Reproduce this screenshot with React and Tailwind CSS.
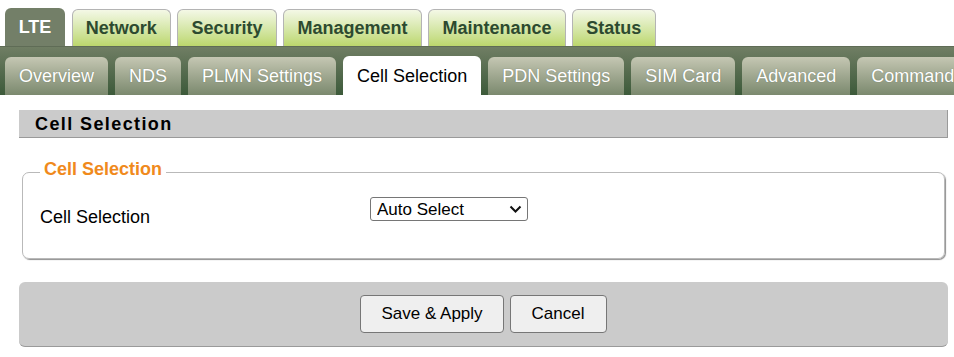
import React from "react";

const topTabs = ["LTE", "Network", "Security", "Management", "Maintenance", "Status"];
const subTabs = [
  "Overview",
  "NDS",
  "PLMN Settings",
  "Cell Selection",
  "PDN Settings",
  "SIM Card",
  "Advanced",
  "Command",
];

export default function App() {
  return (
    <div
      className="w-[954px] h-[357px] overflow-hidden bg-white text-black"
      style={{ fontFamily: '"Liberation Sans", Arial, sans-serif' }}
    >
      {/* Main tabs */}
      <div className="flex gap-[6.5px] pl-[5px] pt-[8px] whitespace-nowrap">
        {topTabs.map((t) =>
          t === "LTE" ? (
            <div
              key={t}
              className="h-[38px] w-[60px] flex items-center justify-center rounded-t-[6px] bg-[#737f68] text-white font-bold text-[18px] leading-[20px]"
            >
              {t}
            </div>
          ) : (
            <div
              key={t}
              className="h-[37px] mt-[1px] px-[13.2px] flex items-center rounded-t-[6px] border border-b-0 border-[#b4b4b4] bg-gradient-to-b from-[#f4f8e6] to-[#bcd76c] text-[#2d4a30] font-bold text-[18px] leading-[20px]"
            >
              {t}
            </div>
          )
        )}
      </div>

      {/* Sub tabs bar */}
      <div className="h-[49px] flex items-end gap-[7px] pl-[5px] border-t border-[#5f6c56] bg-gradient-to-b from-[#707e64] to-[#3c5a3a] whitespace-nowrap overflow-hidden">
        {subTabs.map((t) =>
          t === "Cell Selection" ? (
            <div
              key={t}
              className="h-[39px] shrink-0 px-[14px] flex items-center rounded-t-[6px] bg-white text-black text-[18px] leading-[20px]"
            >
              {t}
            </div>
          ) : (
            <div
              key={t}
              className="h-[38px] shrink-0 px-[14px] flex items-center rounded-t-[6px] bg-gradient-to-b from-[#c5c7b3] to-[#7b896e] text-white text-[18px] leading-[20px] [text-shadow:0_0_1px_rgba(60,70,50,0.5)]"
            >
              {t}
            </div>
          )
        )}
      </div>

      {/* Content */}
      <div className="pl-[19px] pr-[6px] pt-[15px]">
        <div className="h-[28px] flex items-center pl-[16px] bg-[#cbcbcb] border-b border-r border-[#9a9a9a] font-bold text-[18px] leading-[20px] tracking-[1.4px]">
          Cell Selection
        </div>

        <fieldset className="mx-[3px] mt-[20px] border border-[#b9b9b9] rounded-[7px] shadow-[1px_1px_1px_#8f8f8f] pb-[31px]">
          <legend className="ml-[17px] px-[4px] pb-[7px] pt-[1px] text-[18px] leading-[20px] font-bold text-[#f08a1c]">
            Cell Selection
          </legend>
          <div className="flex items-start pl-[17px]">
            <div className="w-[330px] pt-[21px] text-[18px] leading-[20px]">Cell Selection</div>
            <div className="relative mt-[11px]">
              <select className="appearance-none w-[158px] h-[24px] pl-[6px] border border-[#767676] rounded-[3px] bg-white text-[17px] leading-[19px] text-black outline-none">
                <option>Auto Select</option>
                <option>Manual Select</option>
              </select>
              <svg
                className="absolute right-[6px] top-[8px] pointer-events-none"
                width="13"
                height="9"
                viewBox="0 0 13 9"
              >
                <path d="M1.5 1.5 L6.5 6.5 L11.5 1.5" fill="none" stroke="#111" strokeWidth="2" />
              </svg>
            </div>
          </div>
        </fieldset>

        <div className="mt-[23px] h-[65px] flex items-center justify-center gap-[6px] bg-[#cbcbcb] rounded-[6px] border-b border-[#9a9a9a]">
          <button className="h-[38px] px-[20px] bg-[#efefef] border border-[#767676] rounded-[4px] text-[17px] leading-[20px]">
            Save &amp; Apply
          </button>
          <button className="h-[38px] px-[21px] bg-[#efefef] border border-[#767676] rounded-[4px] text-[17px] leading-[20px]">
            Cancel
          </button>
        </div>
      </div>
    </div>
  );
}
